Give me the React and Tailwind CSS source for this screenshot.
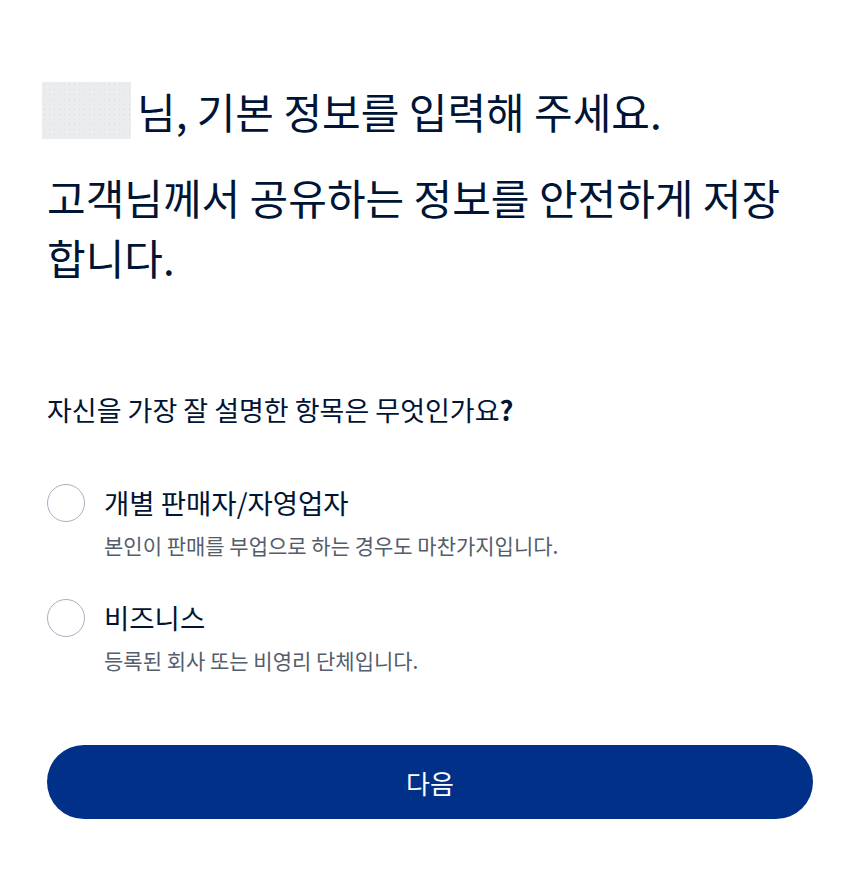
export default function App() {
  const font = { fontFamily: '"Noto Sans CJK KR", "Noto Sans", sans-serif' };
  const options = [
    { title: "개별 판매자/자영업자", desc: "본인이 판매를 부업으로 하는 경우도 마찬가지입니다." },
    { title: "비즈니스", desc: "등록된 회사 또는 비영리 단체입니다." },
  ];
  return (
    <div className="w-[860px] h-[881px] bg-white text-[#001435] px-[47px]" style={font}>
      <div className="pt-[82px] flex items-center">
        {/* masked name placeholder */}
        <div className="w-[89px] h-[57px] -ml-[5px] mr-[6px] bg-[#ebecee] bg-[radial-gradient(#d9dbdf_0.7px,transparent_0.9px)] bg-[length:5px_5px]" />
        <h1 className="text-[42px] leading-[57px] font-normal">님, 기본 정보를 입력해 주세요.</h1>
      </div>
      <p className="mt-[28px] text-[42px] leading-[60px] break-keep">
        고객님께서 공유하는 정보를 안전하게 저장 합니다.
      </p>
      <p className="mt-[105px] text-[27px] leading-[36px]">
        자신을 가장 잘 설명한 항목은 무엇인가요<span className="font-bold">?</span>
      </p>
      <div className="mt-[54px] flex flex-col gap-[37px]">
        {options.map((o) => (
          <label key={o.title} className="flex items-start gap-[19px]">
            <span className="mt-[2px] w-[38px] h-[38px] rounded-full border-[1.5px] border-[#a9afbf] bg-white shrink-0" />
            <span className="flex flex-col">
              <span className="text-[27.5px] leading-[40px]">{o.title}</span>
              <span className="mt-[8px] text-[21px] leading-[30px] text-[#545d6b]">{o.desc}</span>
            </span>
          </label>
        ))}
      </div>
      <button className="mt-[70px] w-full h-[74px] rounded-full bg-[#003087] text-white text-[26px]">
        다음
      </button>
    </div>
  );
}
